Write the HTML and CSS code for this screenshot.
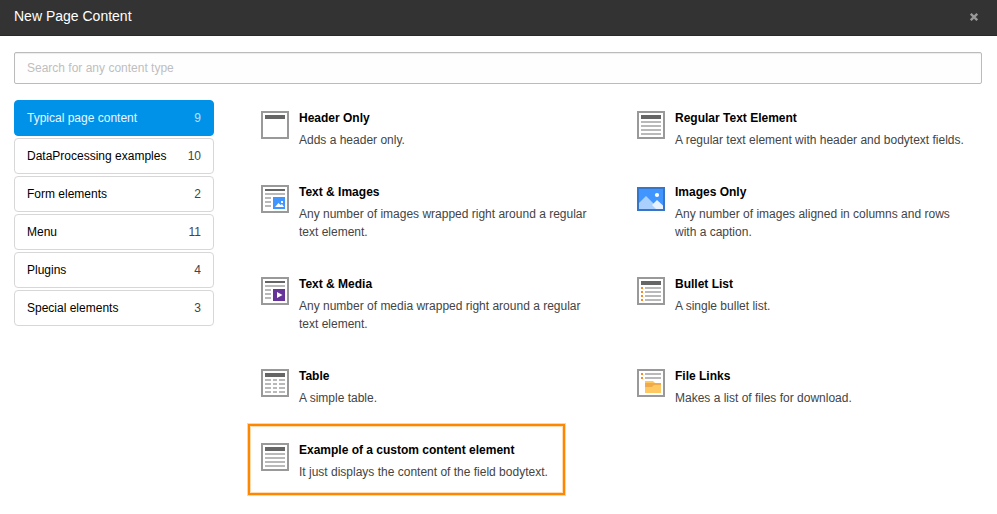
FILE: index.html
```html
<!DOCTYPE html>
<html lang="en">
<head>
<meta charset="utf-8">
<title>New Page Content</title>
<link rel="stylesheet" href="styles.css">
</head>
<body>
<svg class="defs" width="0" height="0" aria-hidden="true">
  <symbol id="frame" viewBox="0 0 28 28"><path fill="#999" d="M0 0h28v28H0z"/><path fill="#fff" d="M2 2h24v24H2z"/></symbol>
  <symbol id="text" viewBox="0 0 28 28"><use href="#frame"/><path fill="#666" d="M4 4h20v4H4z"/><path fill="#b9b9b9" d="M4 10h20v2H4zM4 14h20v2H4zM4 18h20v2H4zM4 22h20v2H4z"/></symbol>
  <symbol id="column" viewBox="0 0 28 28"><use href="#frame"/><path fill="#666" d="M4 4h20v2H4z"/><path fill="#b9b9b9" d="M4 8h20v2H4zM4 12h6v2H4zM4 16h6v2H4zM4 20h6v2H4z"/></symbol>
</svg>
<header class="modal-header">
  <h1>New Page Content</h1>
  <svg class="close" width="8" height="8" viewBox="0 0 8 8"><path d="M.8.8l6.4 6.4M7.2.8L.8 7.2"/></svg>
</header>
<main class="modal-body">
  <input class="search" type="text" placeholder="Search for any content type">
  <div class="wizard">
    <nav class="menu">
      <a class="menu-item active"><span>Typical page content</span><span class="count">9</span></a>
      <a class="menu-item"><span>DataProcessing examples</span><span class="count">10</span></a>
      <a class="menu-item"><span>Form elements</span><span class="count">2</span></a>
      <a class="menu-item"><span>Menu</span><span class="count">11</span></a>
      <a class="menu-item"><span>Plugins</span><span class="count">4</span></a>
      <a class="menu-item"><span>Special elements</span><span class="count">3</span></a>
    </nav>
    <section class="elements">
      <article class="element">
        <svg class="icon" viewBox="0 0 28 28"><use href="#frame"/><path fill="#666" d="M4 4h20v4H4z"/></svg>
        <div class="info"><h2>Header Only</h2><p>Adds a header only.</p></div>
      </article>
      <article class="element">
        <svg class="icon" viewBox="0 0 28 28"><use href="#text"/></svg>
        <div class="info"><h2>Regular Text Element</h2><p>A regular text element with header and bodytext fields.</p></div>
      </article>
      <article class="element">
        <svg class="icon" viewBox="0 0 28 28"><use href="#column"/><path fill="#4095ff" d="M12 12h12v12H12z"/><path fill="#fff" d="M14 22l3.5-4 2 2 1.5-1 2 3zM20 16h2v2h-2z"/></svg>
        <div class="info"><h2>Text &amp; Images</h2><p>Any number of images wrapped right around a regular text element.</p></div>
      </article>
      <article class="element">
        <svg class="icon" viewBox="0 0 28 28"><path fill="#3775c9" d="M0 2h28v24H0z"/><path fill="#4095ff" d="M2 4h24v20H2z"/><path fill="#a9d0ff" d="M2 18l7-7 13 13H2z"/><path fill="#e8f2ff" d="M15 20l5-5 6 5.500v3.500h-7z"/><circle cx="20" cy="10" r="2.100" fill="#fff"/></svg>
        <div class="info"><h2>Images Only</h2><p>Any number of images aligned in columns and rows with a caption.</p></div>
      </article>
      <article class="element">
        <svg class="icon" viewBox="0 0 28 28"><use href="#column"/><path fill="#663399" d="M12 12h12v12H12z"/><path fill="#fff" d="M16 15l5.500 3-5.500 3z"/></svg>
        <div class="info"><h2>Text &amp; Media</h2><p>Any number of media wrapped right around a regular text element.</p></div>
      </article>
      <article class="element">
        <svg class="icon" viewBox="0 0 28 28"><use href="#frame"/><path fill="#666" d="M4 4h20v4H4z"/><path fill="#b9b9b9" d="M8 10h16v2H8zM8 14h16v2H8zM8 18h16v2H8zM8 22h16v2H8z"/><path fill="#ff8720" d="M4 10h2v2H4zM4 14h2v2H4zM4 18h2v2H4zM4 22h2v2H4z"/></svg>
        <div class="info"><h2>Bullet List</h2><p>A single bullet list.</p></div>
      </article>
      <article class="element">
        <svg class="icon" viewBox="0 0 28 28"><use href="#frame"/><path fill="#666" d="M4 4h20v4H4z"/><path fill="#b9b9b9" d="M4 10h6v2H4zM12 10h4v2h-4zM18 10h6v2h-6zM4 14h6v2H4zM12 14h4v2h-4zM18 14h6v2h-6zM4 18h6v2H4zM12 18h4v2h-4zM18 18h6v2h-6zM4 22h6v2H4zM12 22h4v2h-4zM18 22h6v2h-6z"/></svg>
        <div class="info"><h2>Table</h2><p>A simple table.</p></div>
      </article>
      <article class="element">
        <svg class="icon" viewBox="0 0 28 28"><use href="#frame"/><path fill="#b9b9b9" d="M8 4h16v2H8zM8 8h16v2H8z"/><path fill="#ff8720" d="M4 4h2v2H4zM4 8h2v2H4z"/><path fill="#ffc861" d="M8 12h8l2 2h6v10H8z"/><path fill="#efab4b" d="M8 14h16v2h-7l-2 2H8z"/></svg>
        <div class="info"><h2>File Links</h2><p>Makes a list of files for download.</p></div>
      </article>
      <article class="element highlighted">
        <svg class="icon" viewBox="0 0 28 28"><use href="#text"/></svg>
        <div class="info"><h2>Example of a custom content element</h2><p>It just displays the content of the field bodytext.</p></div>
      </article>
    </section>
  </div>
</main>
</body>
</html>
```
FILE: styles.css
```css
*, *::after { box-sizing: border-box; }
body {
  margin: 0;
  min-height: 514px;
  background: #fff;
  color: #000;
  font: 12px/18px "Liberation Sans", Arial, sans-serif;
}
h1, h2, p { margin: 0; }
.defs { display: none; }
.modal-header {
  display: flex;
  justify-content: space-between;
  align-items: center;
  height: 36px;
  padding: 0 19px 3px 14px;
  background: #333;
  border-bottom: 1px solid #292929;
  color: #fff;
}
.modal-header h1 { font-size: 14px; font-weight: 400; line-height: 20px; }
.close { fill: none; stroke: #999; stroke-width: 2.3; margin-top: 2px; }
.modal-body { padding: 16px 15px 0 14px; }
.search {
  display: block;
  width: 100%;
  height: 32px;
  padding: 0 12px;
  border: 1px solid #bbb;
  border-radius: 2px;
  background: #fefefe;
  box-shadow: inset 0 1px 1px rgba(0, 0, 0, .075);
  font: inherit;
}
.search::placeholder { color: #bebebe; opacity: 1; }
.wizard { display: flex; gap: 47px; margin-top: 16px; }
.menu { display: flex; flex-direction: column; gap: 2px; width: 200px; flex: none; }
.menu-item {
  display: flex;
  justify-content: space-between;
  align-items: center;
  height: 36px;
  padding: 0 12px;
  border: 1px solid #d7d7d7;
  border-radius: 4px;
}
.count { color: #444; }
.active { background: #0092e8; border-color: #0092e8; color: #e8f5ff; }
.active .count { color: #b5e0ff; }
.elements {
  display: grid;
  grid-template-columns: 331px 331px;
  column-gap: 45px;
  row-gap: 34px;
  align-content: start;
  padding-top: 9px;
}
.element { position: relative; display: flex; gap: 10px; }
.icon { width: 28px; height: 28px; margin-top: 2px; flex: none; }
.info h2 { font-size: 12px; font-weight: 700; line-height: 18px; }
.info p { margin-top: 4px; color: #444; }
.highlighted::after {
  content: "";
  position: absolute;
  left: -13px;
  top: -17px;
  width: 317px;
  height: 71px;
  border: 2px solid #ff8700;
  box-shadow: 0 0 0 1px rgba(255, 135, 0, .35), inset 0 0 0 1px rgba(255, 135, 0, .3);
}
```
